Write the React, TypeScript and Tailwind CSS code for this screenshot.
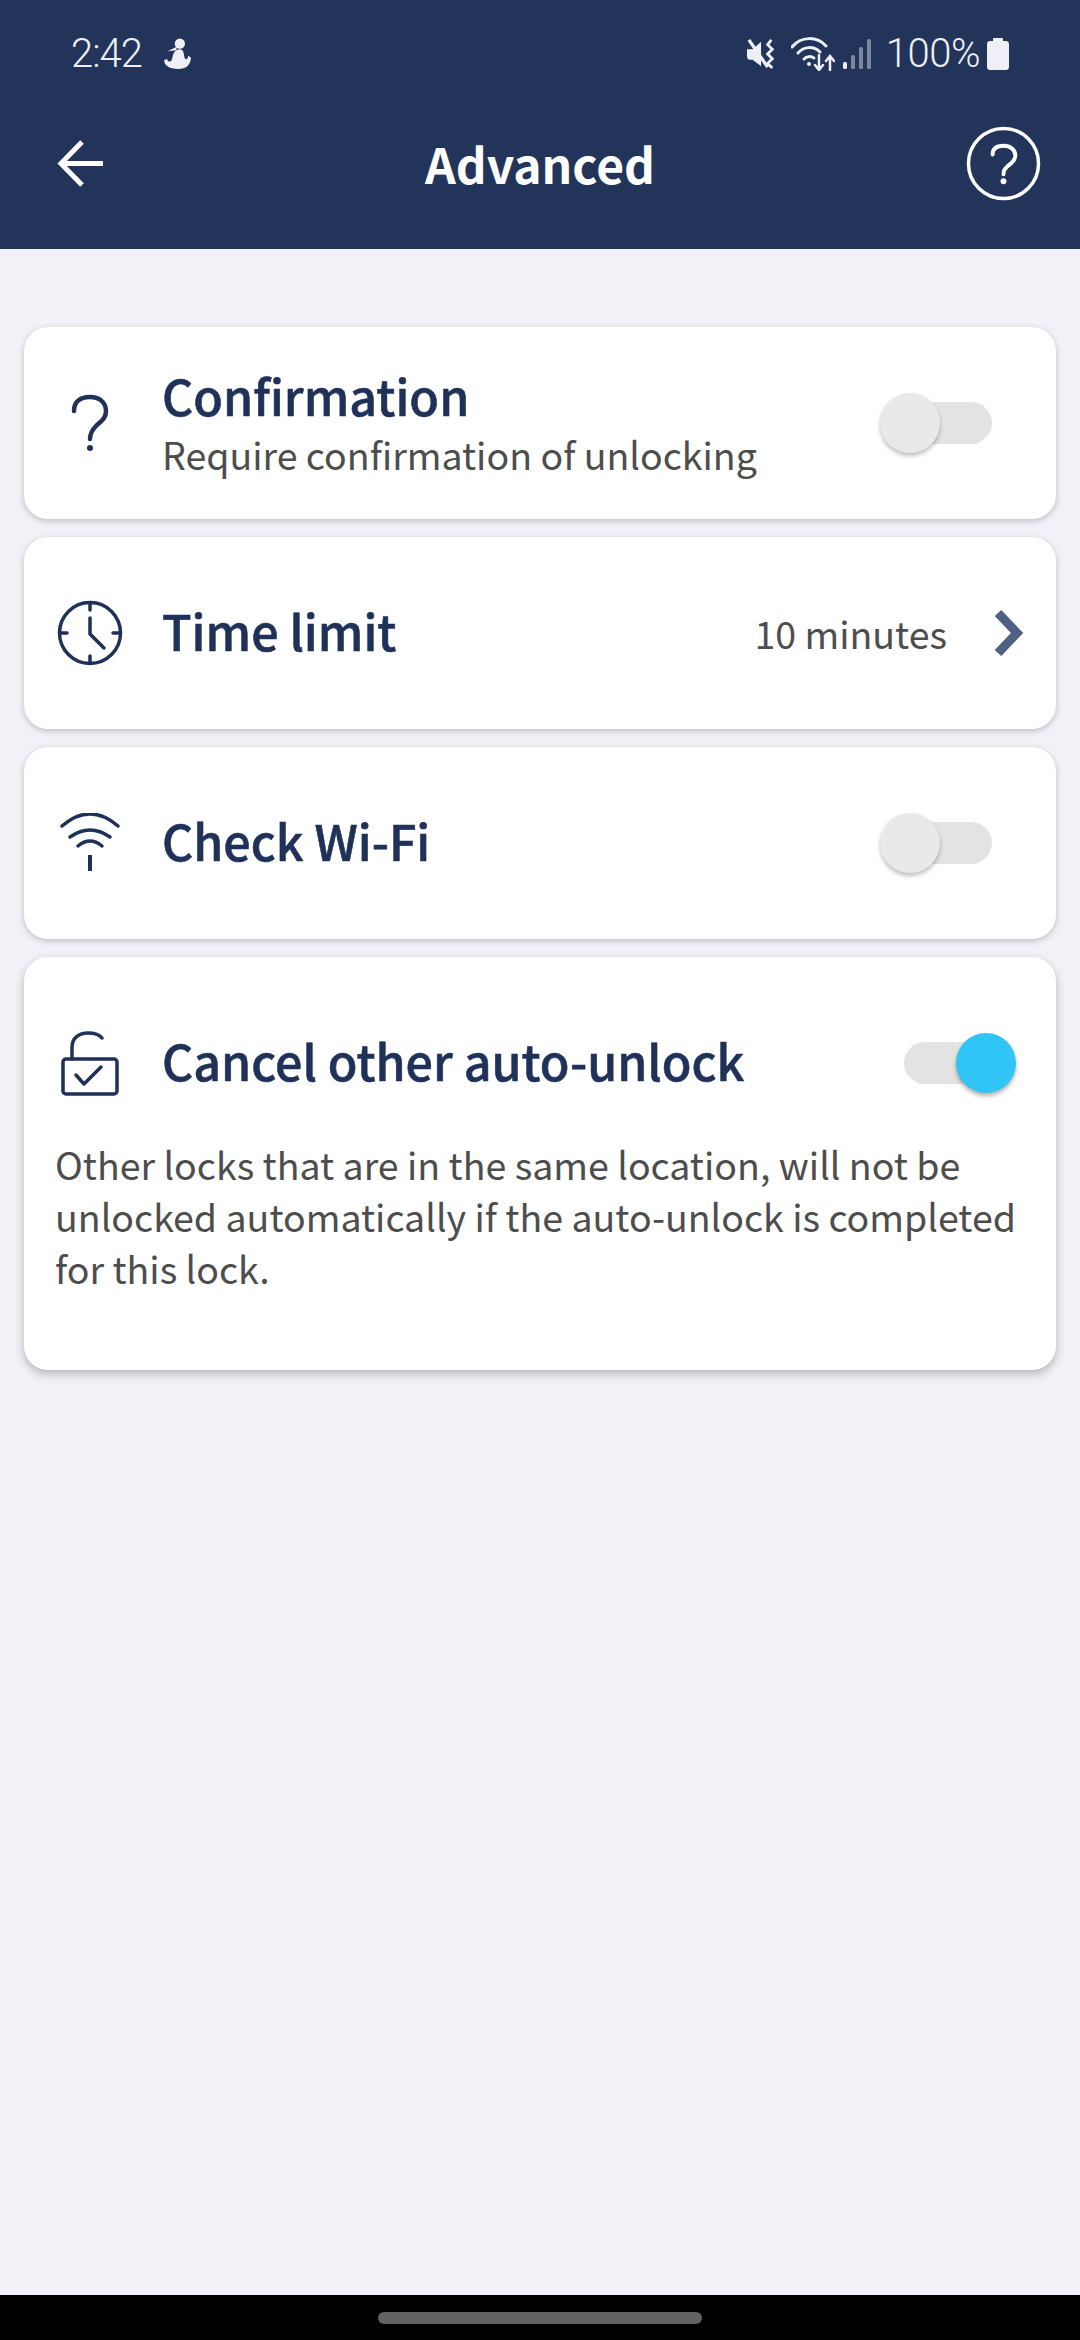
import React from "react";

const FONT = "font-['Noto_Sans_CJK_SC','Noto_Sans',sans-serif]";

function Switch({ on }: { on?: boolean }) {
  return (
    <div className="relative h-[42px] w-[88px] rounded-full bg-[#e3e3e3]">
      <div
        className={
          on
            ? "absolute right-[-24px] top-[-9px] h-[60px] w-[60px] rounded-full bg-[#31c5f6] shadow-[0_3px_4px_rgba(0,0,0,0.3)]"
            : "absolute left-[-24px] top-[-9px] h-[60px] w-[60px] rounded-full bg-[#e9e9e9] shadow-[0_3px_4px_rgba(0,0,0,0.25)]"
        }
      />
    </div>
  );
}

function IconSlot({ children }: { children: React.ReactNode }) {
  return <div className="flex h-[72px] w-[72px] shrink-0 items-center justify-center">{children}</div>;
}

const navy = "#1f3158";

function QuestionIcon() {
  return (
    <svg width="38" height="58" viewBox="0 0 38 58" fill="none" stroke={navy} strokeWidth="4.5" strokeLinecap="round">
      <path d="M3 17C3 7 10 3 19 3C28 3 35 8 35 17C35 25 29 28 25 32C21 36 19 39 19 45" />
      <circle cx="19" cy="54" r="3" fill={navy} stroke="none" />
    </svg>
  );
}

function ClockIcon() {
  return (
    <svg width="66" height="66" viewBox="0 0 66 66" fill="none" stroke={navy} strokeWidth="3.5" strokeLinecap="round">
      <circle cx="33" cy="33" r="30.5" />
      <path d="M33 3V10M33 56V63M3 33H10M56 33H63" />
      <path d="M33 18V34L47 48" />
    </svg>
  );
}

function WifiIcon() {
  return (
    <svg width="60" height="60" viewBox="0 0 60 60" fill="none" stroke={navy} strokeWidth="3.5" strokeLinecap="round">
      <path d="M2 13Q30 -11 58 13" />
      <path d="M10 24Q30 10 50 24" />
      <path d="M18 33Q30 23 42 33" />
      <path d="M30 42V58" strokeWidth="4" strokeLinecap="butt" />
    </svg>
  );
}

function LockIcon() {
  return (
    <svg width="58" height="65" viewBox="0 0 58 65" fill="none" stroke={navy} strokeWidth="3.5" strokeLinecap="round" strokeLinejoin="round">
      <rect x="2" y="28" width="54" height="35" rx="3" />
      <path d="M11 28V16C11 7 18 2 27 2C33 2 38 3 41 7" />
      <path d="M15 44L23 53L40 36" />
    </svg>
  );
}

function Card({ children, className = "" }: { children: React.ReactNode; className?: string }) {
  return <div className={"rounded-[24px] bg-white " + className}>{children}</div>;
}

function Title({ children }: { children: React.ReactNode }) {
  return (
    <div className="pb-[6px] text-[48.4px] leading-[60px] font-medium text-[#1f3158] [-webkit-text-stroke:0.6px_#1f3158]">
      {children}
    </div>
  );
}

const cardShadow = "shadow-[0_2px_6px_rgba(0,0,0,0.22)]";

function Row({ icon, children, right }: { icon: React.ReactNode; children: React.ReactNode; right: React.ReactNode }) {
  return (
    <Card className={"flex h-[192px] items-center pl-[30px] " + cardShadow}>
      <IconSlot>{icon}</IconSlot>
      <div className="ml-[36px] min-w-0 flex-1">{children}</div>
      {right}
    </Card>
  );
}

export default function App() {
  return (
    <div className={"flex h-[2340px] w-[1080px] flex-col overflow-hidden bg-[#f1f1f7] " + FONT}>
      <header className="h-[249px] shrink-0 bg-[#223459] text-white">
        <div className="flex h-[108px] items-center justify-between pl-[71px] pr-[71px] font-['Roboto',sans-serif] text-[40px] font-light text-[#eef0f5]">
          <div className="flex items-center gap-[22px]">
            <span className="tracking-[-1px]">2:42</span>
            <svg width="28" height="32" viewBox="0 0 30 34" fill="#eef0f5">
              <circle cx="17" cy="6" r="5.5" />
              <path d="M4 14L14 9L13 13ZM9 21C10 15 13 12 17 12C21 12 21 16 22 21C23 23 25 24 26 19L29 21C28 29 24 33 15 33C6 33 1 30 0 24L3 22C4 25 6 26 8 24Z" />
            </svg>
          </div>
          <div className="flex items-center">
            <svg width="30" height="32" viewBox="0 0 32 34" fill="#eef0f5" className="mr-[14px]">
              <path d="M0 12H6L15 4V30L6 23H2C0 22 0 20 0 18Z" />
              <path d="M2 2L22 31" stroke="#eef0f5" strokeWidth="3.5" />
              <path d="M26 2L22 7L27 12L22 17L27 22L22 27L27 32" fill="none" stroke="#eef0f5" strokeWidth="3" />
            </svg>
            <svg width="44" height="34" viewBox="0 0 44 34" fill="none" stroke="#eef0f5" strokeWidth="3" strokeLinecap="round" className="mr-[8px]">
              <path d="M1 10C10 -1 26 -1 35 9" />
              <path d="M7 16C13 9 23 9 29 15" />
              <path d="M13 22C16 19 20 19 23 21" />
              <circle cx="18" cy="27" r="2" fill="#eef0f5" stroke="none" />
              <path d="M28 18V32M24 28L28 33L32 28" strokeWidth="2.5" />
              <path d="M39 33V20M35 24L39 19L43 24" strokeWidth="2.5" />
            </svg>
            <svg width="28" height="32" viewBox="0 0 28 32" fill="#eef0f5" className="mr-[15px]">
              <rect x="0" y="24" width="4" height="7" rx="1.5" />
              <rect x="8" y="17" width="4" height="14" rx="1.5" fillOpacity="0.45" />
              <rect x="16" y="9" width="4" height="22" rx="1.5" fillOpacity="0.45" />
              <rect x="24" y="1" width="4" height="30" rx="1.5" fillOpacity="0.45" />
            </svg>
            <span className="mr-[7px] tracking-[-0.5px]">100%</span>
            <svg width="22" height="32" viewBox="0 0 22 32" fill="#eef0f5">
              <path d="M7 0H15C15.6 0 16 .4 16 1V3H19C20.7 3 22 4.3 22 6V29C22 30.7 20.7 32 19 32H3C1.3 32 0 30.7 0 29V6C0 4.3 1.3 3 3 3H6V1C6 .4 6.4 0 7 0Z" />
            </svg>
          </div>
        </div>
        <div className="relative flex h-[110px] items-center justify-center">
          <span className="text-[48px] font-bold">Advanced</span>
          <div className="absolute left-[57px] top-[32px]">
            <svg width="46" height="47" viewBox="0 0 46 47" fill="none" stroke="#fff" strokeWidth="5">
              <path d="M46 23.5H4M25 2L4 23.5L25 45" strokeLinejoin="miter" />
            </svg>
          </div>
          <div className="absolute right-[39px] top-[18px] h-[75px] w-[75px]">
            <svg width="75" height="75" viewBox="0 0 76 76" fill="none" stroke="#fff" strokeWidth="3.5" strokeLinecap="round">
              <circle cx="38" cy="38" r="35.5" />
              <path d="M27 29C27 22 32 20 38 20C45 20 50 24 50 30C50 36 45 38 42 41C39 44 38 45 38 49" strokeWidth="4" />
              <circle cx="38" cy="56" r="3" fill="#fff" stroke="none" />
            </svg>
          </div>
        </div>
      </header>

      <main className="flex flex-1 flex-col gap-[18px] px-[24px] pt-[78px]">
        <Row
          icon={<QuestionIcon />}
          right={
            <div className="mr-[64px]">
              <Switch />
            </div>
          }
        >
          <div className="pb-[2px]">
            <Title>Confirmation</Title>
            <div className="-mt-[2px] text-[37.5px] leading-[50px] text-[#4d4d4d]">Require confirmation of unlocking</div>
          </div>
        </Row>
        <Row
          icon={<ClockIcon />}
          right={
            <div className="mr-[33px] flex items-center gap-[48px]">
              <span className="text-[37.5px] leading-[50px] text-[#4d4d4d]">10 minutes</span>
              <svg width="28" height="46" viewBox="0 0 28 46" fill="none" stroke="#4f6183" strokeWidth="9" className="overflow-visible">
                <path d="M3 3L22 23L3 43" />
              </svg>
            </div>
          }
        >
          <Title>Time limit</Title>
        </Row>
        <Row
          icon={<WifiIcon />}
          right={
            <div className="mr-[64px]">
              <Switch />
            </div>
          }
        >
          <Title>Check Wi-Fi</Title>
        </Row>
        <Card className="h-[413px] px-[31px] pt-[38px] shadow-[0_4px_10px_rgba(0,0,0,0.25)]">
          <div className="-ml-[1px] flex h-[136px] items-center">
            <IconSlot>
              <LockIcon />
            </IconSlot>
            <div className="ml-[36px] flex-1">
              <Title>Cancel other auto-unlock</Title>
            </div>
            <div className="mr-[33px]">
              <Switch on />
            </div>
          </div>
          <p className="mt-[7px] text-[37.5px] leading-[52px] text-[#4d4d4d]">
            Other locks that are in the same location, will not be unlocked automatically if the auto-unlock is completed for this lock.
          </p>
        </Card>
      </main>

      <footer className="flex h-[45px] shrink-0 items-start justify-center bg-black pt-[17px]">
        <div className="h-[12px] w-[324px] rounded-full bg-[#626262]" />
      </footer>
    </div>
  );
}
